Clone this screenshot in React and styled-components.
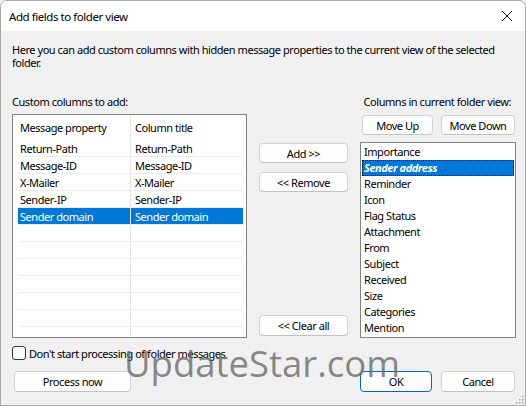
import React from "react";
import styled, { createGlobalStyle } from "styled-components";

const GlobalStyle = createGlobalStyle`
  html, body {
    margin: 0;
    padding: 0;
    background: #f0f0f0;
  }
  * { box-sizing: border-box; }
`;

const Window = styled.div`
  position: relative;
  width: 526px;
  height: 406px;
  background: #f0f0f0;
  border: 1px solid #a9a9a9;
  border-radius: 7px 7px 0 0;
  overflow: hidden;
  display: flex;
  flex-direction: column;
  font-family: "Noto Sans", "Liberation Sans", sans-serif;
  font-size: 11px;
  letter-spacing: -0.45px;
  color: #000;
`;

const TitleBar = styled.div`
  height: 30px;
  background: #fff;
  display: flex;
  align-items: center;
  justify-content: space-between;
  padding: 0 12px 0 8px;
  font-size: 11.5px;
`;

const Body = styled.div`
  flex: 1;
  display: flex;
  flex-direction: column;
  padding: 12px 9px 0 11px;
`;

const Desc = styled.p`
  margin: 0;
  line-height: 13px;
  white-space: nowrap;
`;

const LabelRow = styled.div`
  margin-top: 26px;
  display: flex;
  justify-content: space-between;
  line-height: 13px;
  padding-right: 5px;
`;

const Main = styled.div`
  margin-top: 6px;
  height: 224px;
  display: grid;
  grid-template-columns: 235px 1fr 156px;
  column-gap: 12px;
`;

const Table = styled.div`
  background: #fff;
  border: 1px solid #828282;
  display: flex;
  flex-direction: column;
  padding: 0 3px 0 5px;
  overflow: hidden;
`;

const Row = styled.div`
  display: grid;
  grid-template-columns: 112px 1fr;
  height: ${(p) => (p.$head ? 25 : 17)}px;
  border-bottom: 1px solid ${(p) => (p.$head ? "transparent" : "#ececec")};
  flex-shrink: 0;
`;

const Cell = styled.div`
  display: flex;
  align-items: center;
  padding-left: ${(p) => (p.$second ? 4 : 1)}px;
  border-left: 1px solid ${(p) => (p.$second ? "#e4e4e4" : "transparent")};
  background: ${(p) => (p.$sel ? "#0078d7" : "transparent")};
  color: ${(p) => (p.$sel ? "#fff" : "#000")};
  white-space: nowrap;
`;

const Middle = styled.div`
  display: flex;
  flex-direction: column;
  padding-top: 29px;
  gap: 9px;
`;

const Button = styled.button`
  font: inherit;
  letter-spacing: inherit;
  color: #000;
  height: ${(p) => p.$h || 20}px;
  width: ${(p) => (p.$w ? `${p.$w}px` : "100%")};
  background: #fdfdfd;
  border: 1px solid ${(p) => (p.$default ? "#0067c0" : "#d3d3d3")};
  border-bottom-color: ${(p) => (p.$default ? "#0067c0" : "#c2c2c2")};
  border-radius: 4px;
  padding: 0;
  margin-top: ${(p) => (p.$pushDown ? "auto" : "0")};
  margin-bottom: ${(p) => (p.$pushDown ? "2px" : "0")};
`;

const RightCol = styled.div`
  display: flex;
  flex-direction: column;
`;

const MoveRow = styled.div`
  display: flex;
  gap: 8px;
  padding: 1px 0 0 2px;
`;

const List = styled.div`
  margin-top: 7px;
  flex: 1;
  background: #fff;
  border: 1px solid #828282;
  padding: 1px 1px 0 1px;
  overflow: hidden;
`;

const Item = styled.div`
  height: 16px;
  line-height: 16px;
  padding-left: 2px;
  white-space: nowrap;
  ${(p) =>
    p.$sel &&
    `
    background: #0078d7;
    color: #fff;
    font-weight: bold;
    font-style: italic;
    outline: 1px dotted #000;
    outline-offset: -1px;
  `}
`;

const CheckRow = styled.label`
  margin-top: 8px;
  display: flex;
  align-items: center;
  gap: 3px;
  height: 14px;
`;

const Box = styled.span`
  width: 14px;
  height: 14px;
  border: 1px solid #333;
  border-radius: 3px;
  background: #fbfbfb;
`;

const Footer = styled.div`
  margin-top: 11px;
  display: flex;
  justify-content: space-between;
  padding-left: 2px;
`;

const FooterRight = styled.div`
  display: flex;
  gap: 9px;
  padding-right: 1px;
`;

const Watermark = styled.div`
  position: absolute;
  left: 123px;
  top: 337px;
  font-family: "Open Sans", "Noto Sans", sans-serif;
  font-size: 36.5px;
  letter-spacing: 0;
  color: rgba(105, 105, 105, 0.78);
  pointer-events: none;
  white-space: nowrap;
`;

const Grip = styled.svg`
  position: absolute;
  right: 1px;
  bottom: 1px;
`;

const customRows = [
  ["Return-Path", "Return-Path"],
  ["Message-ID", "Message-ID"],
  ["X-Mailer", "X-Mailer"],
  ["Sender-IP", "Sender-IP"],
  ["Sender domain", "Sender domain", true],
];

const viewColumns = [
  "Importance",
  "Sender address",
  "Reminder",
  "Icon",
  "Flag Status",
  "Attachment",
  "From",
  "Subject",
  "Received",
  "Size",
  "Categories",
  "Mention",
];

export default function App() {
  const empty = Array.from({ length: 7 });
  return (
    <>
      <GlobalStyle />
      <Window>
        <TitleBar>
          <span>Add fields to folder view</span>
          <svg width="12" height="12" viewBox="0 0 12 12">
            <path d="M1 1 L11 11 M11 1 L1 11" stroke="#222" strokeWidth="1" />
          </svg>
        </TitleBar>
        <Body>
          <Desc>
            Here you can add custom columns with hidden message properties to the current view of the selected
            <br />
            folder.
          </Desc>
          <LabelRow>
            <span>Custom columns to add:</span>
            <span>Columns in current folder view:</span>
          </LabelRow>
          <Main>
            <Table>
              <Row $head>
                <Cell>Message property</Cell>
                <Cell $second>Column title</Cell>
              </Row>
              {customRows.map(([a, b, sel]) => (
                <Row key={a}>
                  <Cell $sel={sel}>{a}</Cell>
                  <Cell $second $sel={sel}>{b}</Cell>
                </Row>
              ))}
              {empty.map((_, i) => (
                <Row key={i}>
                  <Cell />
                  <Cell $second />
                </Row>
              ))}
            </Table>
            <Middle>
              <Button>Add &gt;&gt;</Button>
              <Button>&lt;&lt; Remove</Button>
              <Button $pushDown $h={21}>&lt;&lt; Clear all</Button>
            </Middle>
            <RightCol>
              <MoveRow>
                <Button $w={71}>Move Up</Button>
                <Button $w={74}>Move Down</Button>
              </MoveRow>
              <List>
                {viewColumns.map((c, i) => (
                  <Item key={c} $sel={i === 1}>{c}</Item>
                ))}
              </List>
            </RightCol>
          </Main>
          <CheckRow>
            <Box />
            <span>Don't start processing of folder messages</span>
          </CheckRow>
          <Footer>
            <Button $w={117} $h={21}>Process now</Button>
            <FooterRight>
              <Button $w={72} $h={21} $default>OK</Button>
              <Button $w={74} $h={21}>Cancel</Button>
            </FooterRight>
          </Footer>
        </Body>
        <Watermark>UpdateStar.com</Watermark>
        <Grip width="9" height="9" viewBox="0 0 9 9">
          {[[7, 1], [7, 4], [4, 4], [7, 7], [4, 7], [1, 7]].map(([x, y]) => (
            <rect key={`${x}${y}`} x={x} y={y} width="1.4" height="1.4" fill="#9a9a9a" />
          ))}
        </Grip>
      </Window>
    </>
  );
}
